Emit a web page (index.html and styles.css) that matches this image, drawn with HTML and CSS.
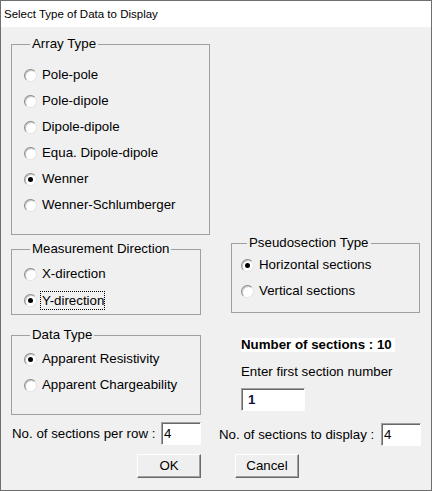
FILE: index.html
```html
<!DOCTYPE html>
<html>
<head>
<meta charset="utf-8">
<link rel="stylesheet" href="styles.css">
</head>
<body>
<div class="window">
  <div class="titlebar">Select Type of Data to Display</div>
  <div class="content">
    <fieldset class="group array">
      <legend>Array Type</legend>
      <div class="radio"><span class="dot"></span><span class="lbl">Pole-pole</span></div>
      <div class="radio"><span class="dot"></span><span class="lbl">Pole-dipole</span></div>
      <div class="radio"><span class="dot"></span><span class="lbl">Dipole-dipole</span></div>
      <div class="radio"><span class="dot"></span><span class="lbl">Equa. Dipole-dipole</span></div>
      <div class="radio"><span class="dot on"></span><span class="lbl">Wenner</span></div>
      <div class="radio"><span class="dot"></span><span class="lbl">Wenner-Schlumberger</span></div>
    </fieldset>
    <div class="middle">
      <div class="col-left">
        <fieldset class="group dir">
          <legend>Measurement Direction</legend>
          <div class="radio"><span class="dot"></span><span class="lbl">X-direction</span></div>
          <div class="radio"><span class="dot on"></span><span class="lbl focus">Y-direction</span></div>
        </fieldset>
        <fieldset class="group dtype">
          <legend>Data Type</legend>
          <div class="radio"><span class="dot on"></span><span class="lbl">Apparent Resistivity</span></div>
          <div class="radio"><span class="dot"></span><span class="lbl">Apparent Chargeability</span></div>
        </fieldset>
      </div>
      <div class="col-right">
        <fieldset class="group pseudo">
          <legend>Pseudosection Type</legend>
          <div class="radio"><span class="dot on"></span><span class="lbl">Horizontal sections</span></div>
          <div class="radio"><span class="dot"></span><span class="lbl">Vertical sections</span></div>
        </fieldset>
        <div class="count"><span class="count-text">Number of sections : 10</span></div>
        <div class="enter">Enter first section number</div>
        <div class="input first">1</div>
      </div>
    </div>
    <div class="fields">
      <div class="field f1"><span>No. of sections per row :</span><div class="input small">4</div></div>
      <div class="field f2"><span>No. of sections to display :</span><div class="input small">4</div></div>
    </div>
    <div class="buttons">
      <div class="btn">OK</div>
      <div class="btn">Cancel</div>
    </div>
  </div>
</div>
</body>
</html>
```

FILE: styles.css
```css
html, body {
  margin: 0;
  padding: 0;
  background: #f0f0f0;
}

.window {
  box-sizing: border-box;
  width: 432px;
  height: 491px;
  border: 1px solid #6f6f6f;
  background: #f0f0f0;
  font-family: "Liberation Sans", Arial, sans-serif;
  font-size: 13.3px;
  color: #000;
  overflow: hidden;
}

.titlebar {
  height: 26px;
  line-height: 26px;
  background: #fff;
  padding-left: 3px;
  font-size: 11.5px;
  color: #000;
}

.content {
  padding-left: 10px;
}

.group {
  margin: 0;
  border: 1px solid #a0a0a0;
  min-width: 0;
  box-sizing: border-box;
}

.group legend {
  padding: 0 2px;
  margin-left: 6px;
  line-height: 16px;
  height: 16px;
}

.array {
  margin-top: 9px;
  width: 199px;
  padding: 10px 0 16px 12px;
}

.radio {
  display: flex;
  align-items: center;
  height: 26px;
  white-space: nowrap;
}

.dot {
  position: relative;
  box-sizing: border-box;
  width: 13px;
  height: 13px;
  border-radius: 50%;
  background: #fff;
  border: 1px solid;
  border-color: #8c8c8c #e3e3e3 #e3e3e3 #8c8c8c;
  box-shadow: inset 1px 1px 0 #c8c8c8;
  margin-right: 5px;
  flex: none;
}

.dot.on::after {
  content: "";
  position: absolute;
  left: 3px;
  top: 3px;
  width: 5px;
  height: 5px;
  border-radius: 50%;
  background: #000;
}

.lbl {
  line-height: 16px;
}

.focus {
  border: 1px dotted #000;
  padding: 0 0 0 1px;
  margin-left: -2px;
  line-height: 17px;
}

.middle {
  display: flex;
  align-items: flex-start;
}

.col-left {
  width: 190px;
  margin-top: 6px;
}

.dir {
  width: 190px;
  padding: 4px 0 1px 12px;
}

.dtype {
  width: 190px;
  margin-top: 12px;
  padding: 3px 0 16px 12px;
}

.col-right {
  width: 189px;
  margin-left: 30px;
}

.pseudo {
  width: 189px;
  padding: 1px 0 8px 9px;
}

.count {
  margin-top: 24px;
  padding-left: 10px;
  height: 14px;
}

.count-text {
  display: inline-block;
  background: #fff;
  font-weight: bold;
  line-height: 14px;
  padding-right: 3px;
}

.enter {
  margin-top: 13px;
  padding-left: 10px;
  line-height: 16px;
}

.input {
  box-sizing: border-box;
  height: 23px;
  background: #fff;
  border: 1px solid;
  border-color: #a0a0a0 #fff #fff #a0a0a0;
  box-shadow: inset 1px 1px 0 #696969;
  line-height: 21px;
}

.input.first {
  margin-top: 8px;
  margin-left: 10px;
  width: 64px;
  padding-left: 6px;
  font-weight: bold;
  color: #101040;
}

.input.small {
  width: 40px;
  padding-left: 2px;
}

.fields {
  display: flex;
  align-items: flex-start;
  margin-top: 7px;
}

.field {
  display: flex;
  align-items: center;
  justify-content: space-between;
  white-space: nowrap;
}

.f1 {
  width: 190px;
  padding-left: 1px;
  box-sizing: border-box;
}

.f2 {
  width: 202px;
  margin-left: 18px;
  margin-top: 1px;
}

.buttons {
  display: flex;
  gap: 34px;
  margin-top: 8px;
  padding-left: 126px;
}

.btn {
  box-sizing: border-box;
  width: 64px;
  height: 24px;
  background: #efefef;
  border: 1px solid;
  border-color: #fff #696969 #696969 #fff;
  box-shadow: inset -1px -1px 0 #a0a0a0;
  text-align: center;
  line-height: 21px;
}
```
